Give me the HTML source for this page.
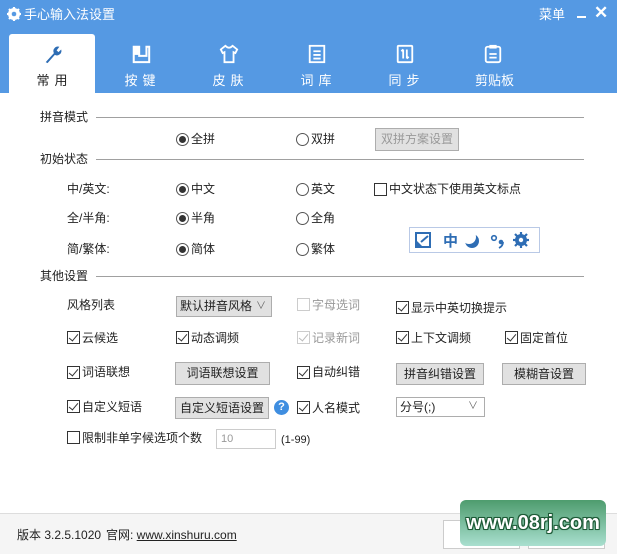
<!DOCTYPE html>
<html><head><meta charset="utf-8"><style>
*{margin:0;padding:0;box-sizing:border-box}
body{width:617px;height:554px;overflow:hidden;background:#fff;font-family:"Liberation Sans","Noto Sans CJK SC",sans-serif;font-size:12px;color:#222;position:relative}
.a{position:absolute;white-space:nowrap}
.t{line-height:16px}
.hdr{position:absolute;left:0;top:0;width:617px;height:93px;background:#5599e3}
.tab{position:absolute;top:34px;width:86px;height:59px;color:#fff;text-align:center;font-size:13px;letter-spacing:5px}
.tab .lb{position:absolute;top:36px;left:0;width:100%;padding-left:5px}
.tab svg{position:absolute;left:34px;top:10px}
.sec{position:absolute;left:40px}
.line{position:absolute;height:1px;background:#a0a0a0;right:33px}
.rb{position:absolute;width:13px;height:13px;border:1px solid #555;border-radius:50%;background:#fff}
.rb.on::after{content:"";position:absolute;left:2px;top:2px;width:7px;height:7px;border-radius:50%;background:#333}
.cb{position:absolute;width:13px;height:13px;border:1px solid #333;background:#fff}
.cb.on::after{content:"";position:absolute;left:3px;top:0px;width:4px;height:8px;border:solid #333;border-width:0 1.5px 1.5px 0;transform:rotate(40deg)}
.cb.dis{border-color:#ccc}.cb.dis::after{border-color:#bbb}
.btn{position:absolute;background:#e1e1e1;border:1px solid #adadad;text-align:center;font-size:12px}
.sel{position:absolute;border:1px solid #adadad;font-size:12px;padding-left:3px;white-space:nowrap;overflow:hidden}
.gray{color:#999}
</style></head><body>
<div class="hdr"></div>
<svg class="a" style="left:7px;top:7px" width="14" height="14" viewBox="0 0 14 14"><circle cx="7" cy="7" r="4.5" fill="none" stroke="#fff" stroke-width="3"/><g stroke="#fff" stroke-width="2.2"><line x1="7" y1="0" x2="7" y2="14"/><line x1="0" y1="7" x2="14" y2="7"/><line x1="2" y1="2" x2="12" y2="12"/><line x1="12" y1="2" x2="2" y2="12"/></g><circle cx="7" cy="7" r="2.3" fill="#5599e3"/></svg>
<div class="a t" style="left:24px;top:7px;color:#fff;font-size:13px">手心输入法设置</div>
<div class="a t" style="left:539px;top:7px;color:#fff;font-size:13px">菜单</div>
<div class="a" style="left:577px;top:16px;width:9px;height:2px;background:#fff"></div>
<div class="a" style="left:594px;top:3px;color:#fff;font-size:17px;font-weight:bold">✕</div>

<div class="tab" style="left:9px;background:#fff;color:#222;border-radius:3px 3px 0 0"><svg width="20" height="20" viewBox="0 0 22 22"><path d="M3 20 L12 10 A5 5 0 0 1 18 3 L15 7 L17 9 L20 6 A5 5 0 0 1 13 12 L5 21 Z" fill="#2e6db4"/></svg><div class="lb">常用</div></div>
<div class="tab" style="left:97px"><svg width="20" height="20" viewBox="0 0 22 22"><path d="M3 3h6v10h8V3h3v17H3z" fill="none" stroke="#fff" stroke-width="2.2"/><rect x="3" y="3" width="6" height="9" fill="#fff"/></svg><div class="lb">按键</div></div>
<div class="tab" style="left:185px"><svg width="20" height="20" viewBox="0 0 22 22"><path d="M7 2 L2 6 L4 10 L6 9 V20 H16 V9 L18 10 L20 6 L15 2 Q11 6 7 2Z" fill="none" stroke="#fff" stroke-width="2"/></svg><div class="lb">皮肤</div></div>
<div class="tab" style="left:273px"><svg width="20" height="20" viewBox="0 0 22 22"><rect x="3" y="2" width="16" height="18" fill="none" stroke="#fff" stroke-width="2"/><path d="M7 8h8M7 12h8M7 16h8" stroke="#fff" stroke-width="2"/></svg><div class="lb">词库</div></div>
<div class="tab" style="left:361px"><svg width="20" height="20" viewBox="0 0 22 22"><rect x="3" y="2" width="16" height="18" rx="1" fill="none" stroke="#fff" stroke-width="2"/><path d="M9 6v10M7 8l2-2M13 6v10M15 14l-2 2" stroke="#fff" stroke-width="2"/></svg><div class="lb">同步</div></div>
<div class="tab" style="left:449px"><svg width="20" height="20" viewBox="0 0 22 22"><rect x="3" y="3" width="16" height="17" rx="2" fill="none" stroke="#fff" stroke-width="2"/><rect x="7" y="1" width="8" height="4" fill="#fff"/><path d="M7 11h8M7 15h8" stroke="#fff" stroke-width="2"/></svg><div class="lb" style="letter-spacing:0">剪贴板</div></div>

<div class="sec t" style="top:109px">拼音模式</div><div class="line" style="left:96px;top:117px"></div>
<div class="rb on" style="left:176px;top:133px"></div><div class="a t" style="left:191px;top:131px">全拼</div>
<div class="rb" style="left:296px;top:133px"></div><div class="a t" style="left:311px;top:131px">双拼</div>
<div class="btn gray" style="left:375px;top:128px;width:84px;height:23px;line-height:21px">双拼方案设置</div>

<div class="sec t" style="top:151px">初始状态</div><div class="line" style="left:96px;top:159px"></div>
<div class="a t" style="left:67px;top:181px">中/英文:</div>
<div class="rb on" style="left:176px;top:183px"></div><div class="a t" style="left:191px;top:181px">中文</div>
<div class="rb" style="left:296px;top:183px"></div><div class="a t" style="left:311px;top:181px">英文</div>
<div class="cb" style="left:374px;top:183px"></div><div class="a t" style="left:389px;top:181px">中文状态下使用英文标点</div>
<div class="a t" style="left:67px;top:210px">全/半角:</div>
<div class="rb on" style="left:176px;top:212px"></div><div class="a t" style="left:191px;top:210px">半角</div>
<div class="rb" style="left:296px;top:212px"></div><div class="a t" style="left:311px;top:210px">全角</div>
<div class="a t" style="left:67px;top:241px">简/繁体:</div>
<div class="rb on" style="left:176px;top:243px"></div><div class="a t" style="left:191px;top:241px">简体</div>
<div class="rb" style="left:296px;top:243px"></div><div class="a t" style="left:311px;top:241px">繁体</div>
<div class="a" style="left:409px;top:227px;width:131px;height:26px;border:1px solid #b9c9e6"></div>
<svg class="a" style="left:415px;top:231px" width="120" height="18" viewBox="0 0 120 18"><rect x="1" y="2" width="14" height="14" fill="none" stroke="#2e6db4" stroke-width="2"/><path d="M1 9 L1 16 L8 16Z" fill="#2e6db4"/><path d="M6 11 L13 5" stroke="#2e6db4" stroke-width="2"/><text x="28" y="15" font-size="15" font-weight="bold" fill="#2e6db4" font-family="Noto Sans CJK SC,sans-serif">中</text><circle cx="57" cy="10" r="7" fill="#2e6db4"/><circle cx="54" cy="6" r="7" fill="#fff"/><circle cx="79" cy="7" r="2.3" fill="none" stroke="#2e6db4" stroke-width="1.6"/><circle cx="86" cy="11" r="2.3" fill="#2e6db4"/><path d="M88 11 Q88 15 84 17" fill="none" stroke="#2e6db4" stroke-width="1.8"/><circle cx="106" cy="9" r="4.5" fill="none" stroke="#2e6db4" stroke-width="3"/><g stroke="#2e6db4" stroke-width="2.2"><line x1="106" y1="1" x2="106" y2="17"/><line x1="98" y1="9" x2="114" y2="9"/><line x1="100" y1="3" x2="112" y2="15"/><line x1="112" y1="3" x2="100" y2="15"/></g><circle cx="106" cy="9" r="2.2" fill="#fff"/></svg>

<div class="sec t" style="top:268px">其他设置</div><div class="line" style="left:96px;top:276px"></div>
<div class="a t" style="left:67px;top:297px">风格列表</div>
<div class="sel" style="left:176px;top:296px;width:96px;height:21px;line-height:19px;background:#e1e1e1">默认拼音风格<span style="position:absolute;right:5px;top:0;font-size:10px;color:#666">∨</span></div>
<div class="cb dis" style="left:297px;top:298px"></div><div class="a t gray" style="left:312px;top:297px">字母选词</div>
<div class="cb on" style="left:396px;top:301px"></div><div class="a t" style="left:411px;top:300px">显示中英切换提示</div>

<div class="cb on" style="left:67px;top:331px"></div><div class="a t" style="left:82px;top:330px">云候选</div>
<div class="cb on" style="left:176px;top:331px"></div><div class="a t" style="left:191px;top:330px">动态调频</div>
<div class="cb on dis" style="left:297px;top:331px"></div><div class="a t gray" style="left:312px;top:330px">记录新词</div>
<div class="cb on" style="left:396px;top:331px"></div><div class="a t" style="left:411px;top:330px">上下文调频</div>
<div class="cb on" style="left:505px;top:331px"></div><div class="a t" style="left:520px;top:330px">固定首位</div>

<div class="cb on" style="left:67px;top:366px"></div><div class="a t" style="left:82px;top:364px">词语联想</div>
<div class="btn" style="left:175px;top:362px;width:95px;height:23px;line-height:21px">词语联想设置</div>
<div class="cb on" style="left:297px;top:366px"></div><div class="a t" style="left:312px;top:364px">自动纠错</div>
<div class="btn" style="left:396px;top:363px;width:88px;height:22px;line-height:20px">拼音纠错设置</div>
<div class="btn" style="left:502px;top:363px;width:84px;height:22px;line-height:20px">模糊音设置</div>

<div class="cb on" style="left:67px;top:400px"></div><div class="a t" style="left:82px;top:399px">自定义短语</div>
<div class="btn" style="left:175px;top:397px;width:94px;height:22px;line-height:20px">自定义短语设置</div>
<div class="a" style="left:274px;top:400px;width:15px;height:15px;border-radius:50%;background:#3f8ee0;color:#fff;font-size:11px;font-weight:bold;text-align:center;line-height:15px">?</div>
<div class="cb on" style="left:297px;top:401px"></div><div class="a t" style="left:312px;top:400px">人名模式</div>
<div class="sel" style="left:396px;top:397px;width:89px;height:20px;line-height:18px">分号(;)<span style="position:absolute;right:6px;top:0;font-size:10px;color:#666">∨</span></div>

<div class="cb" style="left:67px;top:431px"></div><div class="a t" style="left:82px;top:430px">限制非单字候选项个数</div>
<div class="a" style="left:216px;top:429px;width:60px;height:20px;border:1px solid #ccc;color:#999;font-size:11px;line-height:18px;padding-left:4px">10</div>
<div class="a t" style="left:281px;top:432px;font-size:11px">(1-99)</div>

<div class="a" style="left:0;top:513px;width:617px;height:41px;background:#f5f5f5;border-top:1px solid #ddd"></div>
<div class="a t" style="left:17px;top:527px;font-size:12px">版本 3.2.5.1020</div>
<div class="a t" style="left:106px;top:527px;font-size:12px">官网: <span style="text-decoration:underline">www.xinshuru.com</span></div>
<div class="a" style="left:443px;top:520px;width:77px;height:29px;border:1px solid #ccc;background:#fff"></div>
<div class="a" style="left:528px;top:520px;width:77px;height:29px;border:1px solid #ccc;background:#fff"></div>
<div class="a" style="left:460px;top:500px;width:146px;height:46px;border-radius:6px;background:linear-gradient(#4e9c6e,#a9dfcf);color:#fff;font-weight:bold;font-size:20px;text-align:center;line-height:46px;text-shadow:0 0 2px #1d5a36,1px 1px 0 #1d5a36,-1px -1px 0 #1d5a36,1px -1px 0 #1d5a36,-1px 1px 0 #1d5a36">www.08rj.com</div>
</body></html>
